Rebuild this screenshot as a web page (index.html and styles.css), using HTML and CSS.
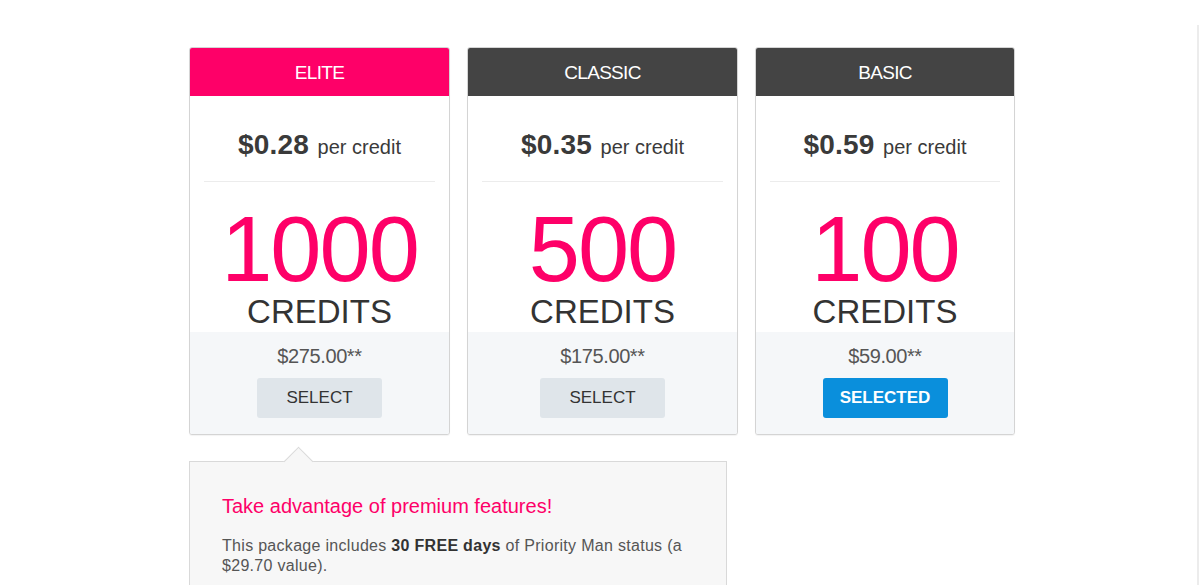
FILE: index.html
```html
<!DOCTYPE html>
<html>
<head>
<meta charset="utf-8">
<link rel="stylesheet" href="styles.css">
</head>
<body>
<div class="page">
  <div class="plans">
    <div class="plan plan-elite">
      <div class="plan-head">ELITE</div>
      <div class="plan-rate"><span class="rate">$0.28</span> per credit</div>
      <div class="plan-amount">
        <div class="amount">1000</div>
        <div class="unit">CREDITS</div>
      </div>
      <div class="plan-foot">
        <div class="total">$275.00**</div>
        <button class="btn">SELECT</button>
      </div>
    </div>
    <div class="plan">
      <div class="plan-head">CLASSIC</div>
      <div class="plan-rate"><span class="rate">$0.35</span> per credit</div>
      <div class="plan-amount">
        <div class="amount">500</div>
        <div class="unit">CREDITS</div>
      </div>
      <div class="plan-foot">
        <div class="total">$175.00**</div>
        <button class="btn">SELECT</button>
      </div>
    </div>
    <div class="plan">
      <div class="plan-head">BASIC</div>
      <div class="plan-rate"><span class="rate">$0.59</span> per credit</div>
      <div class="plan-amount">
        <div class="amount">100</div>
        <div class="unit">CREDITS</div>
      </div>
      <div class="plan-foot">
        <div class="total">$59.00**</div>
        <button class="btn btn-selected">SELECTED</button>
      </div>
    </div>
  </div>
  <div class="promo">
    <h3 class="promo-title">Take advantage of premium features!</h3>
    <p class="promo-text">This package includes <strong>30 FREE days</strong> of Priority Man status (a $29.70 value).</p>
  </div>
</div>
</body>
</html>
```
FILE: styles.css
```css
html, body {
  margin: 0;
  padding: 0;
  background: #fff;
  overflow: hidden;
}
body {
  font-family: "Liberation Sans", Arial, sans-serif;
  color: #333;
}
.page {
  margin-top: 25px;
  width: 1199px;
  height: 560px;
  border-right: 2px solid #ececec;
  padding: 22px 0 0 189px;
  box-sizing: border-box;
}
.plans {
  display: grid;
  grid-template-columns: 261px 271px 260px;
  column-gap: 17px;
  align-items: start;
}
.plan {
  border: 1px solid #d4d4d4;
  border-radius: 3px;
  background: #fff;
  overflow: hidden;
  text-align: center;
  box-shadow: 0 1px 1px rgba(0,0,0,0.05);
}
.plan-head {
  height: 48px;
  line-height: 49px;
  background: #444;
  color: #fff;
  font-size: 19px;
  letter-spacing: -0.7px;
}
.plan-elite .plan-head {
  background: #fe0068;
}
.plan-rate {
  margin: 0 14px;
  padding: 34px 0 19px;
  line-height: 30px;
  border-bottom: 1px solid #ececec;
  font-size: 20px;
  color: #3a3a3a;
}
.rate {
  font-size: 28px;
  font-weight: 700;
  letter-spacing: 0.2px;
  margin-right: 3px;
}
.plan-amount {
  padding: 21px 0 4px;
}
.amount {
  font-size: 92px;
  line-height: 92px;
  color: #fe0068;
  letter-spacing: -2px;
}
.unit {
  font-size: 33px;
  line-height: 33px;
  color: #333;
}
.plan-foot {
  background: #f5f7f9;
  padding: 12px 0 16px;
}
.total {
  font-size: 20px;
  line-height: 24px;
  color: #555;
  letter-spacing: -0.4px;
}
.btn {
  display: block;
  margin: 10px auto 0;
  width: 125px;
  height: 40px;
  border: 0;
  border-radius: 3px;
  background: #dfe5ea;
  color: #333;
  font-family: inherit;
  font-size: 17px;
  cursor: pointer;
}
.btn-selected {
  background: #0a8fdc;
  color: #fff;
  font-weight: 700;
}
.promo {
  position: relative;
  margin-top: 26px;
  width: 538px;
  box-sizing: border-box;
  height: 160px;
  background: #f7f7f7;
  border: 1px solid #d9d9d9;
  padding: 32px 35px 0 32px;
}
.promo::before {
  content: "";
  position: absolute;
  left: 98px;
  top: -11px;
  width: 20px;
  height: 20px;
  background: #f7f7f7;
  border-left: 1px solid #d9d9d9;
  border-top: 1px solid #d9d9d9;
  transform: rotate(45deg);
}
.promo-title {
  margin: 0;
  font-size: 20px;
  line-height: 24px;
  font-weight: 400;
  color: #fe0068;
}
.promo-text {
  margin: 18px 0 0;
  font-size: 16px;
  line-height: 20px;
  color: #555;
  letter-spacing: 0.3px;
}
.promo-text strong {
  color: #333;
}
```
